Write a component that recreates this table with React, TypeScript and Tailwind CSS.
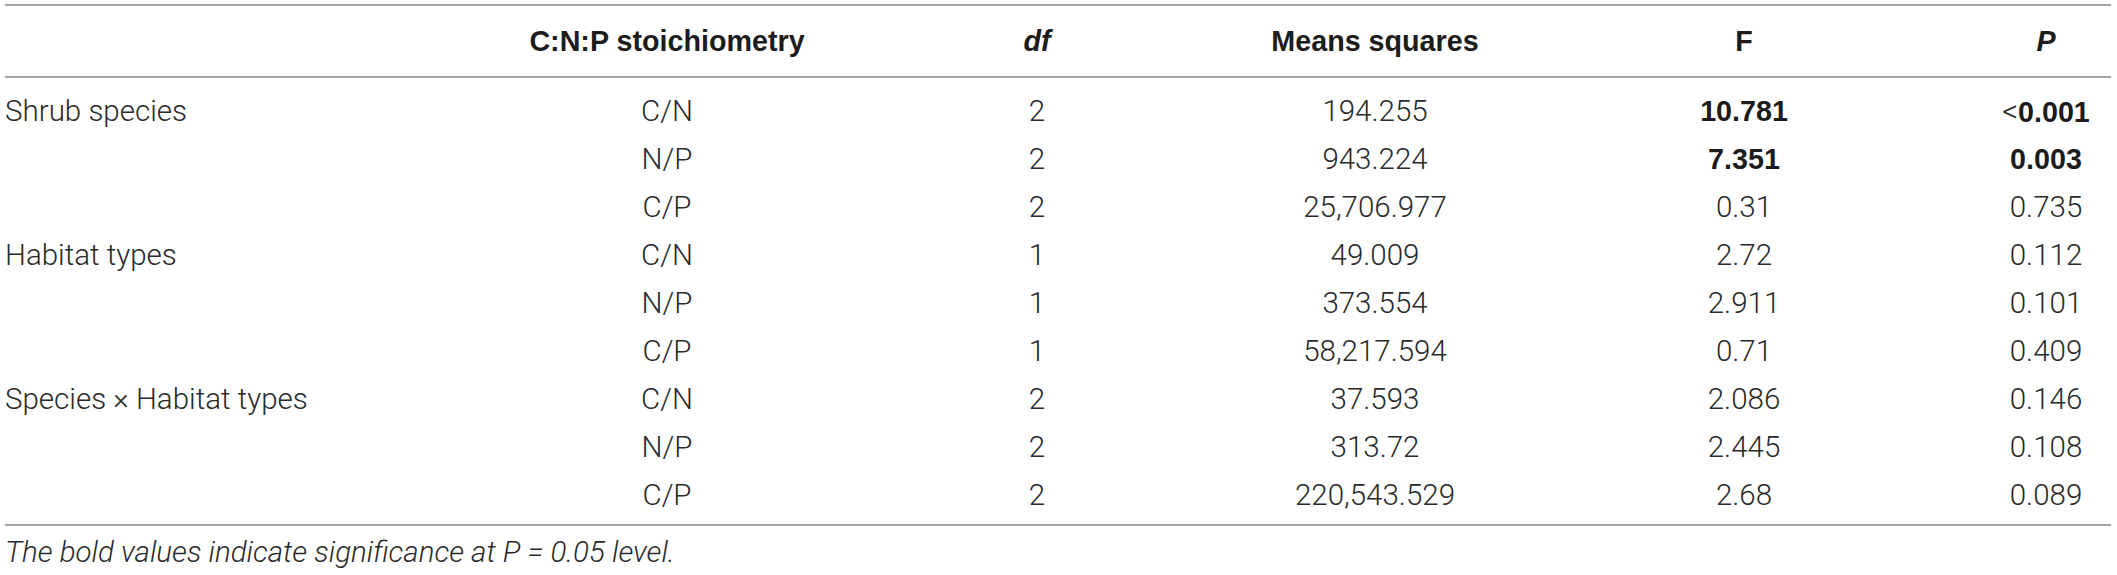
import React from "react";

type Cell = { t: string; b?: boolean; lt?: boolean };
type Row = [string, string, string, string, Cell, Cell];

const rows: Row[] = [
  ["Shrub species", "C/N", "2", "194.255", { t: "10.781", b: true }, { t: "0.001", b: true, lt: true }],
  ["", "N/P", "2", "943.224", { t: "7.351", b: true }, { t: "0.003", b: true }],
  ["", "C/P", "2", "25,706.977", { t: "0.31" }, { t: "0.735" }],
  ["Habitat types", "C/N", "1", "49.009", { t: "2.72" }, { t: "0.112" }],
  ["", "N/P", "1", "373.554", { t: "2.911" }, { t: "0.101" }],
  ["", "C/P", "1", "58,217.594", { t: "0.71" }, { t: "0.409" }],
  ["Species \u00d7 Habitat types", "C/N", "2", "37.593", { t: "2.086" }, { t: "0.146" }],
  ["", "N/P", "2", "313.72", { t: "2.445" }, { t: "0.108" }],
  ["", "C/P", "2", "220,543.529", { t: "2.68" }, { t: "0.089" }],
];

const grid = "grid grid-cols-[498px_328px_412px_264px_474px_130px] items-center";

function V({ c }: { c: Cell }) {
  return (
    <div className="text-center whitespace-nowrap">
      {c.lt && <span className="text-[31px]">&lt;</span>}
      <span className={c.b ? "font-bold text-[28.7px] text-[#1c1c1c] font-['Liberation_Sans',Arial,sans-serif]" : ""}>{c.t}</span>
    </div>
  );
}

export default function App() {
  return (
    <div className="w-[2117px] h-[575px] bg-white pl-[5px] pt-[4px] text-[29.5px] leading-[1.15] text-[#2a2a2a] font-light font-['Roboto','Liberation_Sans',sans-serif]">
      <div className="w-[2106px]">
        <div className={`${grid} h-[74px] border-y-2 border-[#a3a3a3] font-bold text-[#1c1c1c] text-[28.7px] font-['Liberation_Sans',Arial,sans-serif]`}>
          <div />
          <div className="text-center whitespace-nowrap">C:N:P stoichiometry</div>
          <div className="text-center italic">df</div>
          <div className="text-center whitespace-nowrap">Means squares</div>
          <div className="text-center">F</div>
          <div className="text-center italic">P</div>
        </div>
        <div className="pt-[10px] pb-[4px] border-b-2 border-[#a3a3a3]">
          {rows.map((r, i) => (
            <div key={i} className={`${grid} h-[48px]`}>
              <div className="whitespace-nowrap">{r[0]}</div>
              <div className="text-center">{r[1]}</div>
              <div className="text-center">{r[2]}</div>
              <div className="text-center whitespace-nowrap">{r[3]}</div>
              <V c={r[4]} />
              <V c={r[5]} />
            </div>
          ))}
        </div>
        <div className="pt-[10px] italic whitespace-nowrap">
          The bold values indicate significance at P = 0.05 level.
        </div>
      </div>
    </div>
  );
}
